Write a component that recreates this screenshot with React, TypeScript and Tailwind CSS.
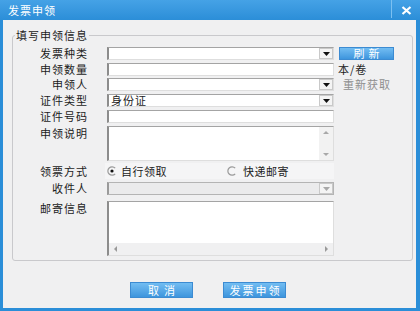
import React from "react";

const font = "font-['Noto_Sans_CJK_SC','Noto_Sans',sans-serif]";

/* sunken white field */
const field =
  "bg-white border border-[#dedede] border-t-[#a4a4a4] border-l-2 border-l-[#8c8c8c]";

function Arrow({ disabled }: { disabled?: boolean }) {
  return (
    <div className="ml-auto w-[14px] h-full flex items-center justify-center bg-[#f4f4f4] border border-[#c9c9c9]">
      <svg width="7" height="4" viewBox="0 0 7 4">
        <path d="M0 0h7L3.5 4z" fill={disabled ? "#a8a8a8" : "#111"} />
      </svg>
    </div>
  );
}

function Label({ text, top }: { text: string; top?: boolean }) {
  return (
    <span
      className={`w-[75px] shrink-0 text-right text-[11px] tracking-[1px] leading-[13px] ${top ? "self-start pt-[1px]" : ""}`}
    >
      {text}
    </span>
  );
}

function Radio({ checked }: { checked?: boolean }) {
  return (
    <svg width="10" height="10" viewBox="0 0 10 10">
      <path d="M8.2 2.2A4.2 4.2 0 1 0 8.2 7.8" fill="none" stroke="#9a9a9a" strokeWidth="1.2" />
      {checked && <circle cx="5" cy="5" r="1.6" fill="#111" />}
    </svg>
  );
}

function BlueButton({ text, className }: { text: string; className: string }) {
  return (
    <button
      className={`flex items-center justify-center text-white text-[11px] leading-none border border-[#3c8bd2] bg-gradient-to-b from-[#72bdf2] to-[#3d95dd] ${className}`}
    >
      {text}
    </button>
  );
}

export default function App() {
  return (
    <div className={`w-[420px] h-[311px] flex flex-col bg-[#2b8ed8] text-[11px] text-[#1c1c1c] ${font}`}>
      {/* TITLE BAR */}
      <div className="h-[20px] shrink-0 flex items-center bg-gradient-to-b from-[#45a2e6] to-[#2b8ed8]">
        <span className="ml-[8px] text-white text-[11px] tracking-[1px] leading-none">发票申领</span>
        <div className="ml-auto w-px h-[18px] self-start bg-[#7cc0f1]" />
        <div className="w-[28px] flex items-center justify-center">
          <svg width="11" height="9" viewBox="0 0 11 9">
            <path d="M1.5 1l8 7M9.5 1l-8 7" stroke="#fff" strokeWidth="2.2" />
          </svg>
        </div>
      </div>

      {/* BODY */}
      <div className="flex-1 ml-[3px] mr-[4px] mb-[3px] bg-[#f0f0f1] flex flex-col">
        <fieldset className="mt-[8px] ml-[9px] mr-[3px] h-[233px] border border-[#c9c9cc] rounded-[3px] pl-0 pt-[5px]">
          <legend className="ml-[2px] px-[1px] text-[11px] tracking-[1px] leading-[14px]">填写申领信息</legend>

          <div className="flex flex-col">
            {/* 发票种类 */}
            <div className="flex items-center h-[13px]">
              <Label text="发票种类" />
              <div className={`ml-[19px] w-[227px] h-full flex ${field}`}>
                <Arrow />
              </div>
              <BlueButton text="刷新" className="ml-[5px] w-[55px] h-[13px] tracking-[4px] pl-[4px]" />
            </div>

            {/* 申领数量 */}
            <div className="flex items-center h-[13px] mt-[3px]">
              <Label text="申领数量" />
              <div className={`ml-[19px] w-[227px] h-full ${field}`} />
              <span className="ml-[4px] leading-[13px] tracking-[1px]">本/卷</span>
            </div>

            {/* 申领人 */}
            <div className="flex items-center h-[13px] mt-[2px]">
              <Label text="申领人" />
              <div className={`ml-[19px] w-[227px] h-full flex ${field}`}>
                <Arrow />
              </div>
              <span className="ml-[9px] leading-[13px] text-[#8e8e8e] tracking-[1px]">重新获取</span>
            </div>

            {/* 证件类型 */}
            <div className="flex items-center h-[13px] mt-[3px]">
              <Label text="证件类型" />
              <div className={`ml-[19px] w-[227px] h-full flex items-center ${field}`}>
                <span className="pl-[2px] leading-[11px] tracking-[1px]">身份证</span>
                <Arrow />
              </div>
            </div>

            {/* 证件号码 */}
            <div className="flex items-center h-[13px] mt-[3px]">
              <Label text="证件号码" />
              <div className={`ml-[19px] w-[227px] h-full ${field}`} />
            </div>

            {/* 申领说明 */}
            <div className="flex h-[35px] mt-[3px]">
              <Label text="申领说明" top />
              <div className={`ml-[19px] w-[227px] h-full flex ${field}`}>
                <div className="ml-auto w-[14px] h-full bg-[#f2f2f2] flex flex-col items-center justify-between py-[4px]">
                  <svg width="6" height="3" viewBox="0 0 6 3"><path d="M0 3h6L3 0z" fill="#a8a8a8" /></svg>
                  <svg width="6" height="3" viewBox="0 0 6 3"><path d="M0 0h6L3 3z" fill="#a8a8a8" /></svg>
                </div>
              </div>
            </div>

            {/* 领票方式 */}
            <div className="flex items-center h-[16px] mt-[2px]">
              <Label text="领票方式" />
              <div className="ml-[17px] w-[229px] h-full flex items-center bg-[#f5f5f6]">
                <span className="ml-[2px]"><Radio checked /></span>
                <span className="ml-[4px] leading-[13px] tracking-[0.5px]">自行领取</span>
                <span className="ml-[60px]"><Radio /></span>
                <span className="ml-[6px] leading-[13px] tracking-[0.5px]">快递邮寄</span>
              </div>
            </div>

            {/* 收件人 */}
            <div className="flex items-center h-[13px] mt-[3px]">
              <Label text="收件人" />
              <div className="ml-[19px] w-[227px] h-full flex bg-[#ebebec] border border-[#b4b4b4] border-l-2 border-l-[#9a9a9a]">
                <Arrow disabled />
              </div>
            </div>

            {/* 邮寄信息 */}
            <div className="flex h-[55px] mt-[6px]">
              <Label text="邮寄信息" top />
              <div className={`ml-[19px] w-[227px] h-full flex flex-col ${field}`}>
                <div className="flex-1" />
                <div className="h-[12px] bg-[#f0f0f1] flex items-center justify-between px-[5px]">
                  <svg width="3" height="6" viewBox="0 0 3 6"><path d="M3 0v6L0 3z" fill="#9a9a9a" /></svg>
                  <svg width="3" height="6" viewBox="0 0 3 6"><path d="M0 0v6l3-3z" fill="#9a9a9a" /></svg>
                </div>
              </div>
            </div>
          </div>
        </fieldset>

        {/* BUTTONS */}
        <div className="mt-[21px] flex justify-center gap-[30px] pr-[3px]">
          <BlueButton text="取消" className="w-[63px] h-[16px] tracking-[5px] pl-[5px]" />
          <BlueButton text="发票申领" className="w-[63px] h-[16px] tracking-[2px] pl-[2px]" />
        </div>
      </div>
    </div>
  );
}
